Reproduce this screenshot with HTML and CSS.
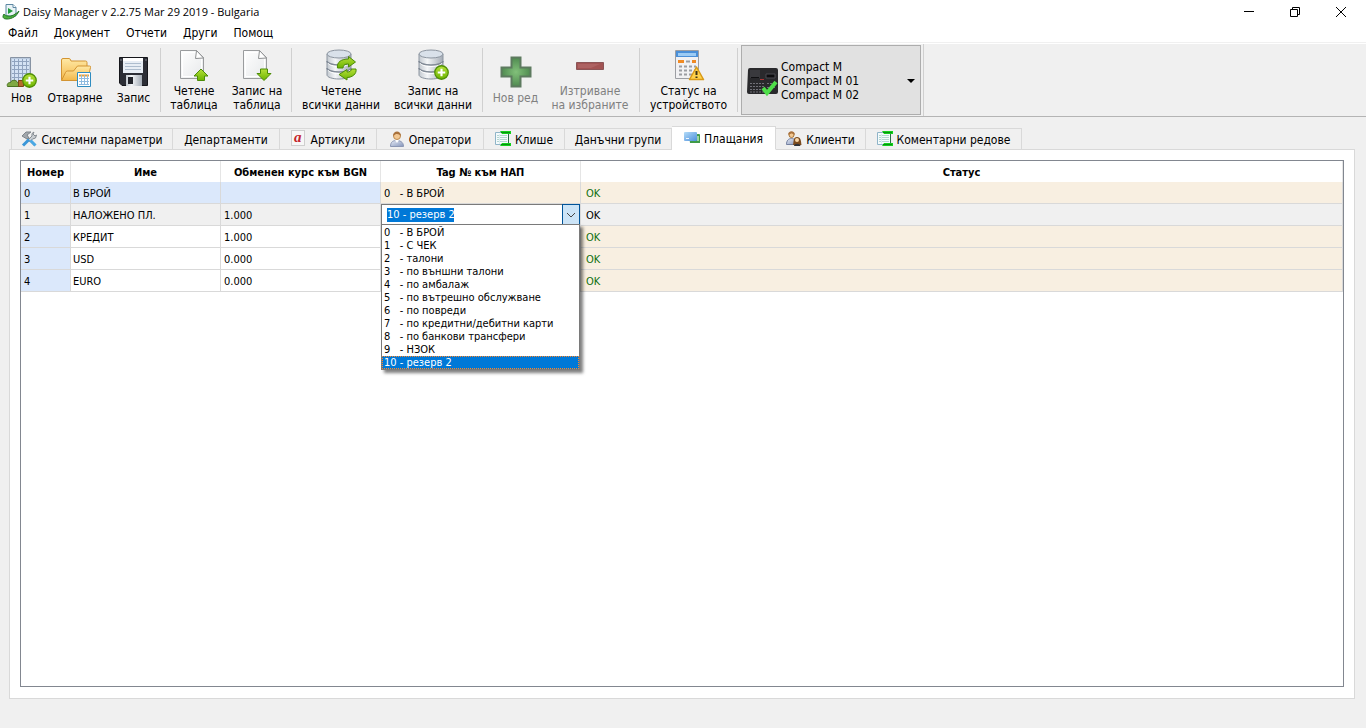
FILE: index.html
```html
<!DOCTYPE html>
<html lang="bg">
    <head>
        <meta charset="UTF-8">
        <title>Daisy Manager v 2.2.75 Mar 29 2019 - Bulgaria</title>
        <link rel="stylesheet" href="styles.css">
    </head>
    <body>
        <svg class="defs" width="0" height="0">
            <defs>
                <linearGradient id="paper" x1="0" y1="0" x2="1" y2="1">
                    <stop offset="0" stop-color="#fff"/><stop offset="1" stop-color="#e6e8ea"/>
                </linearGradient>
                <linearGradient id="green" x1="0" y1="0" x2="0" y2="1">
                    <stop offset="0" stop-color="#b6e03a"/><stop offset="1" stop-color="#6cb400"/>
                </linearGradient>
                <linearGradient id="metal" x1="0" y1="0" x2="1" y2="0">
                    <stop offset="0" stop-color="#c3c9d0"/><stop offset=".35" stop-color="#f4f6f8"/><stop offset="1" stop-color="#a3abb5"/>
                </linearGradient>
                <linearGradient id="folder" x1="0" y1="0" x2="0" y2="1">
                    <stop offset="0" stop-color="#ffe9a6"/><stop offset="1" stop-color="#f3b748"/>
                </linearGradient>
                <linearGradient id="shirt" x1="0" y1="0" x2="1" y2="1">
                    <stop offset="0" stop-color="#e6ebf5"/><stop offset="1" stop-color="#8595bb"/>
                </linearGradient>
                <linearGradient id="card" x1="0" y1="0" x2="1" y2="1">
                    <stop offset="0" stop-color="#b4dcf8"/><stop offset="1" stop-color="#4d8fdc"/>
                </linearGradient>
                <radialGradient id="cross">
                    <stop offset="0" stop-color="#82c07a"/><stop offset="1" stop-color="#4f8a50"/>
                </radialGradient>
                <symbol id="page" viewBox="0 0 32 32">
                    <path d="M2.500 1.500h16l7 7v21h-23z" fill="url(#paper)" stroke="#9a9c9e"/>
                    <path d="M4.500 3.500h13v6h6v18h-19z" fill="none" stroke="#fff"/>
                    <path d="M18.500 1.500l-1 8 8-.5z" fill="#fff" stroke="#8d8f91" stroke-linejoin="round"/>
                </symbol>
                <symbol id="base" viewBox="0 0 32 32">
                    <path d="M2 5v21c0 2 5 4 12 4s12-2 12-4V5z" fill="url(#metal)" stroke="#8c95a0"/>
                    <path d="M2 12c0 2 5 4 12 4s12-2 12-4M2 19c0 2 5 4 12 4s12-2 12-4" fill="none" stroke="#818a96" stroke-width="1.500"/>
                    <path d="M3 14c1 2 5 3.500 11 3.500s10-1.500 11-3.500M3 21c1 2 5 3.500 11 3.500s10-1.500 11-3.500" fill="none" stroke="#fff"/>
                    <ellipse cx="14" cy="5" rx="12" ry="4" fill="#d9e1ea" stroke="#8c95a0"/>
                </symbol>
                <symbol id="add" viewBox="0 0 14 14">
                    <circle cx="7" cy="7" r="6.300" fill="url(#green)" stroke="#4f8f05" stroke-width="1.200"/>
                    <path d="M7 3.500v7M3.500 7h7" stroke="#fff" stroke-width="2"/>
                </symbol>
                <symbol id="sheet" viewBox="0 0 16 16">
                    <path d="M.5 1.500h13v12H.5z" fill="#f4fafc" stroke="#8fb4c8"/>
                    <path d="M2 4.500h10M2 6.500h10M2 8.500h10M2 10.500h10" stroke="#b3d6d0"/>
                    <path d="M4.500 3v10" stroke="#dcecf0"/>
                    <path d="M13.500 3v10" stroke="#2d6b4a"/>
                    <path d="M5 0h11v3H7zM7 12h9v3H5z" fill="#12d01c"/>
                    <path d="M6 1.500h9M6 13.500h9" stroke="#079310"/>
                </symbol>
            </defs>
        </svg>

        <header class="titlebar">
            <svg class="app-icon" width="18" height="18" viewBox="0 0 18 18">
                <path d="M4 1.500h7l3 3V13H4z" fill="#e9f3f6" stroke="#5d87a3"/>
                <path d="M11 1.500v3h3" fill="#fff" stroke="#5d87a3"/>
                <path d="M6 5l5 3-5 3z" fill="#1f9a3a"/>
                <path d="M2 11c-2 3-1 5 3 5 5 0 10-3 12-8-3 3-8 6-11 5-2 0-3-1-4-2z" fill="#4caf3c" stroke="#23762a"/>
            </svg>
            <span class="title">Daisy Manager v 2.2.75 Mar 29 2019 - Bulgaria</span>
            <div class="window-buttons">
                <button aria-label="Minimize"><svg width="12" height="12"><path d="M1 5.500h10" stroke="#000"/></svg></button>
                <button aria-label="Restore"><svg width="12" height="12"><path d="M1.500 3.500h7v7h-7zM3.500 3V1.500h7v7H9" fill="none" stroke="#000"/></svg></button>
                <button aria-label="Close"><svg width="12" height="12"><path d="M1 1l10 10M11 1L1 11" stroke="#000"/></svg></button>
            </div>
        </header>

        <nav class="menu">
            <a href="#">Файл</a>
            <a href="#">Документ</a>
            <a href="#">Отчети</a>
            <a href="#">Други</a>
            <a href="#">Помощ</a>
        </nav>

        <div class="toolbar">
            <div class="group files">
                <button>
                    <svg width="32" height="32" viewBox="0 0 32 32">
                        <path d="M4.500 1.500h20v26h-20z" fill="#b9c9dd" stroke="#8793a3"/>
                        <path d="M6 3h17v23H6z" fill="#d3e2f4"/>
                        <path d="M8.500 3v23M12.500 3v23M16.500 3v23M20.500 3v23M6 5.500h17M6 9.500h17M6 13.500h17M6 17.500h17M6 21.500h17" stroke="#8fa3bf"/>
                        <path d="M1.500 30.500c-1-3 1-4 3-4 1-3 6-3 7 0 2 0 3 2 2 4z" fill="#7fa843" stroke="#4b7322"/>
                        <path d="M12.500 24.500h5v6h-5z" fill="#b56b2c" stroke="#7c4516"/>
                        <use href="#add" x="16" y="17" width="15" height="15"/>
                    </svg>
                    Нов
                </button>
                <button>
                    <svg width="32" height="32" viewBox="0 0 32 32">
                        <path d="M2.500 24V4q0-1.500 1.500-1.500h6q1.500 0 2 2.500h14.500q1.500 0 1.500 1.500V24z" fill="url(#folder)" stroke="#d39432"/>
                        <path d="M2.500 24.500l4-8q.5-1.500 2-1.500h6l4-5h12q1.500 0 1 1.500l-3 13z" fill="url(#folder)" stroke="#d39432"/>
                        <path d="M18.500 16.500h13v14h-13z" fill="#fff" stroke="#2f8cc0"/>
                        <path d="M20 19.500h10" stroke="#e8a13a" stroke-width="2"/>
                        <path d="M20 22.500h10M20 25.500h10M20 28.500h10M22.500 19v10M25.500 19v10M28.500 19v10" stroke="#8fbbe0"/>
                    </svg>
                    Отваряне
                </button>
                <button>
                    <svg width="32" height="32" viewBox="0 0 32 32">
                        <path d="M1.500 1.500h28v28H4l-2.500-2.500z" fill="#2c2e36" stroke="#15161b"/>
                        <path d="M5 2h20v15H5z" fill="#e8eef5"/>
                        <path d="M5 2h20v3H5z" fill="#fff"/>
                        <path d="M7 7.500h16M7 10.500h16M7 13.500h16" stroke="#aebdce"/>
                        <path d="M8 19h16v11H8z" fill="url(#metal)"/>
                        <path d="M10 21h5v7h-5z" fill="#22242b"/>
                        <path d="M28 3v2M3 3v2" stroke="#7b7e88"/>
                    </svg>
                    Запис
                </button>
            </div>
            <div class="group tables">
                <button>
                    <svg width="32" height="32" viewBox="0 0 32 32">
                        <use href="#page" width="32" height="32"/>
                        <path d="M23 20l7 7h-3.500v4.500h-7V27H16z" fill="url(#green)" stroke="#4c8c08" stroke-linejoin="round"/>
                    </svg>
                    Четене<br>таблица
                </button>
                <button>
                    <svg width="32" height="32" viewBox="0 0 32 32">
                        <use href="#page" width="32" height="32"/>
                        <path d="M23 31.500l7-7h-3.500V20h-7v4.500H16z" fill="url(#green)" stroke="#4c8c08" stroke-linejoin="round"/>
                    </svg>
                    Запис на<br>таблица
                </button>
            </div>
            <div class="group data">
                <button>
                    <svg width="32" height="32" viewBox="0 0 32 32">
                        <use href="#base" width="32" height="32"/>
                        <path d="M12.500 19c-1-6 4-9 11-9V7.500l7 5.500-7 5V15c-4 0-5 1-5.500 4z" fill="url(#green)" stroke="#4c8c08" stroke-linejoin="round"/>
                        <path d="M31 20c1 5-4 8.500-9 8.500V31l-8-5.500 8-5V23c3 0 4-1 4.500-3z" fill="url(#green)" stroke="#4c8c08" stroke-linejoin="round"/>
                    </svg>
                    Четене<br>всички данни
                </button>
                <button>
                    <svg width="32" height="32" viewBox="0 0 32 32">
                        <use href="#base" width="32" height="32"/>
                        <use href="#add" x="17" y="16" width="15" height="15"/>
                    </svg>
                    Запис на<br>всички данни
                </button>
            </div>
            <div class="group rows">
                <button disabled>
                    <svg width="32" height="32" viewBox="0 0 32 32">
                        <path d="M11.500 1.500h9v10h10v9h-10v10h-9v-10h-10v-9h10z" fill="url(#cross)" stroke="#5d7a5f" stroke-width="2"/>
                    </svg>
                    Нов ред
                </button>
                <button disabled>
                    <svg width="32" height="32" viewBox="0 0 32 32">
                        <path d="M2.500 13.500h27v7h-27z" fill="#a25353" stroke="#8b5557"/>
                        <path d="M4 15h22l-9 4H4z" fill="#ad6262"/>
                    </svg>
                    Изтриване<br>на избраните
                </button>
            </div>
            <div class="group status">
                <button>
                    <svg width="32" height="32" viewBox="0 0 32 32">
                        <path d="M2.500 1.500h23v28h-23z" fill="#f1f1f3" stroke="#9c9ea3"/>
                        <path d="M3 2h22v6H3z" fill="#4a8fd8"/>
                        <path d="M5 4h18v3H5z" fill="#9ccbf4"/>
                        <path d="M5 11h6v3H5zM19 11h4v3h-4z" fill="#f08a24"/>
                        <path d="M13 12.500h4M6 17.500h3m2 0h3m2 0h3m2 0h2M6 21.500h3m2 0h3m2 0h3m2 0h2M6 25.500h3m2 0h3m2 0h3" stroke="#9b9da2" stroke-width="2"/>
                        <path d="M23.500 18l7 12.500h-14z" fill="#ffd24b" stroke="#d99a17" stroke-width="1.500" stroke-linejoin="round"/>
                        <path d="M23.500 22v4M23.500 27.500v1.500" stroke="#3d3215" stroke-width="2"/>
                    </svg>
                    Статус на<br>устройството
                </button>
            </div>
            <div class="group devices">
                <button class="device">
                    <svg width="32" height="32" viewBox="0 0 32 32">
                        <path d="M1 5q0-2 2-2h26q2 0 2 2v22q0 2-2 2H2q-2 0-2-2z" fill="#29292c"/>
                        <path d="M3 5h10v8H3z" fill="#39393d"/>
                        <path d="M19 9h9v4h-9z" fill="#0c0c0e" stroke="#4a4a50"/>
                        <path d="M4 12.500h8" stroke="#101012"/>
                        <path d="M13 14.500h4" stroke="#a33"/>
                        <path d="M3 18.500h14M3 21.500h14M3 24.500h14M3 27h14M20 18.500h9M20 22.500h9" stroke="#707077" stroke-dasharray="2 1"/>
                        <path d="M16 23l4 5 9-11" fill="none" stroke="#4fdf4a" stroke-width="4"/>
                    </svg>
                    <span>Compact M<br>Compact M 01<br>Compact M 02</span>
                    <svg class="arrow" width="8" height="4"><path d="M0 0h8L4 4z"/></svg>
                </button>
            </div>
        </div>

        <main>
            <div class="tabs" role="tablist">
                <button role="tab" class="tab-system">
                    <svg width="16" height="16" viewBox="0 0 16 16">
                        <path d="M5 5l9 9.500" stroke="#9aa0a6" stroke-width="2"/>
                        <path d="M1 5l4-4h5L6 4l2 3-2 1z" fill="#a2a7ac" stroke="#7f858b"/>
                        <path d="M7 9l4-4q-1-3 2-4l-1 2 2 2 1.500-1q0 4-4 4l-3 3z" fill="#c9cdd1" stroke="#858b91"/>
                        <path d="M2 14.500l6-6" stroke="#3b97d8" stroke-width="3"/>
                        <path d="M9.500 9.500l5 5" stroke="#4aa8e4" stroke-width="3"/>
                    </svg>
                    Системни параметри
                </button>
                <button role="tab" class="tab-departments">Департаменти</button>
                <button role="tab" class="tab-articles">
                    <span class="letter">a</span>
                    Артикули
                </button>
                <button role="tab" class="tab-operators">
                    <svg width="16" height="16" viewBox="0 0 16 16">
                        <path d="M1.500 15.500c0-5 3-6 6-6s7 1 7 6z" fill="url(#shirt)" stroke="#8c97b4"/>
                        <path d="M6 9l2 3 2-3z" fill="#fff"/>
                        <circle cx="8" cy="5" r="3.500" fill="#f2c893" stroke="#bd8b50"/>
                        <path d="M4 5c0-6 8-6 8 0-2-2-4-2-5-2z" fill="#a9713c"/>
                    </svg>
                    Оператори
                </button>
                <button role="tab" class="tab-header">
                    <svg width="16" height="16"><use href="#sheet"/></svg>
                    Клише
                </button>
                <button role="tab" class="tab-taxes">Данъчни групи</button>
                <button role="tab" class="tab-payments active" aria-selected="true">
                    <svg width="16" height="16" viewBox="0 0 16 16">
                        <path d="M5 4.500l10-.5q1 0 1 1v8H6z" fill="#3f9a48"/>
                        <path d="M13 6h2v5h-2z" fill="#9fd6a0"/>
                        <path d="M0 3q0-1 1-1h11q1 0 1 1v7q0 1-1 1H1q-1 0-1-1z" fill="url(#card)"/>
                        <path d="M2 8.500h3" stroke="#eef7ff"/>
                    </svg>
                    Плащания
                </button>
                <button role="tab" class="tab-clients">
                    <svg width="16" height="16" viewBox="0 0 16 16">
                        <path d="M.5 13.500c0-4 2-6 5-6s5 2 5 6z" fill="url(#shirt)" stroke="#7380a0"/>
                        <circle cx="5.500" cy="4" r="2.500" fill="#f2c893" stroke="#a87538"/>
                        <path d="M2 4c0-5 7-5 7 0-2-2-4-2-7 0z" fill="#a9713c"/>
                        <path d="M7 14c1-4 0-8 4-8s4 4 4.500 8z" fill="#7b4b1e"/>
                        <circle cx="11" cy="9" r="2" fill="#f7d6a8"/>
                        <path d="M8 15c0-3 6-3 6.500 0z" fill="#2e3138"/>
                    </svg>
                    Клиенти
                </button>
                <button role="tab" class="tab-comments">
                    <svg width="16" height="16"><use href="#sheet"/></svg>
                    Коментарни редове
                </button>
            </div>

            <section class="pane">
                <div class="grid">
                    <table>
                        <colgroup>
                            <col class="col-number">
                            <col class="col-name">
                            <col class="col-rate">
                            <col class="col-tag">
                            <col>
                        </colgroup>
                        <thead>
                            <tr><th>Номер</th><th>Име</th><th>Обменен курс към BGN</th><th>Tag № към НАП</th><th>Статус</th></tr>
                        </thead>
                        <tbody>
                            <tr class="locked"><td>0</td><td>В БРОЙ</td><td></td><td>0&nbsp;&nbsp; - В БРОЙ</td><td>OK</td></tr>
                            <tr class="current">
                                <td>1</td><td>НАЛОЖЕНО ПЛ.</td><td>1.000</td>
                                <td class="editor">
                                    <div class="combo">
                                        <input type="text" value="10 - резерв 2" aria-label="Tag № към НАП">
                                        <button aria-label="Избор"><svg width="10" height="6"><path d="M1 1l4 4 4-4" fill="none" stroke="#444"/></svg></button>
                                        <select size="11" aria-label="Tag № към НАП">
                                            <option>0&nbsp;&nbsp; - В БРОЙ</option>
                                            <option>1&nbsp;&nbsp; - С ЧЕК</option>
                                            <option>2&nbsp;&nbsp; - талони</option>
                                            <option>3&nbsp;&nbsp; - по външни талони</option>
                                            <option>4&nbsp;&nbsp; - по амбалаж</option>
                                            <option>5&nbsp;&nbsp; - по вътрешно обслужване</option>
                                            <option>6&nbsp;&nbsp; - по повреди</option>
                                            <option>7&nbsp;&nbsp; - по кредитни/дебитни карти</option>
                                            <option>8&nbsp;&nbsp; - по банкови трансфери</option>
                                            <option>9&nbsp;&nbsp; - НЗОК</option>
                                            <option selected>10 - резерв 2</option>
                                        </select>
                                    </div>
                                </td>
                                <td>OK</td>
                            </tr>
                            <tr><td>2</td><td>КРЕДИТ</td><td>1.000</td><td></td><td>OK</td></tr>
                            <tr><td>3</td><td>USD</td><td>0.000</td><td></td><td>OK</td></tr>
                            <tr><td>4</td><td>EURO</td><td>0.000</td><td></td><td>OK</td></tr>
                        </tbody>
                    </table>
                </div>
            </section>
        </main>
    </body>
</html>
```
FILE: styles.css
```css
*{
    box-sizing:border-box;
}
body{
    display:flex;
    flex-direction:column;
    height:100vh;
    margin:0;
    background:#f0f0f0;
    color:#000;
    font:12px/14px Tahoma, "DejaVu Sans Condensed", "DejaVu Sans", sans-serif;
}
button{
    margin:0;
    padding:0;
    border:0;
    background:none;
    color:inherit;
    font:inherit;
}
svg{
    flex:none;
}
.defs{
    position:absolute;
}

/* title and menu */
.titlebar{
    display:flex;
    align-items:center;
    height:23px;
    padding:0 2px;
    background:#fff;
}
.title{
    margin-left:3px;
    font-family:"Segoe UI", "Open Sans", sans-serif;
    font-size:11px;
}
.window-buttons{
    display:flex;
    margin-left:auto;
}
.window-buttons button{
    display:flex;
    align-items:center;
    justify-content:center;
    width:46px;
    height:20px;
}
.menu{
    display:flex;
    gap:16px;
    height:20px;
    padding:3px 8px;
    background:#fff;
    border-bottom:1px solid #f0f0f0;
}
.menu a{
    color:#000;
    text-decoration:none;
}

/* toolbar */
.toolbar{
    display:flex;
    height:74px;
    border-top:1px solid #fff;
    border-bottom:1px solid #b4b4b4;
}
.group{
    display:flex;
    margin:4px 0;
    border-right:1px solid #d0d0d0;
}
.group button{
    display:flex;
    flex-direction:column;
    align-items:center;
    justify-content:center;
    width:64px;
    text-align:center;
    white-space:nowrap;
}
.group svg{
    margin-bottom:3px;
}
.files button{
    width:53px;
}
.files button:first-child{
    width:43px;
}
.files button:nth-child(2){
    width:64px;
}
.tables{
    padding:0 3px 0 1px;
}
.tables button:last-child{
    width:62px;
}
.data button{
    width:92px;
}
.data{
    padding:0 3px;
}
.rows{
    padding-right:7px;
}
.rows button{
    width:84px;
}
.rows button:first-child{
    width:65px;
}
.status button{
    width:97px;
}
.group button:disabled{
    color:#808080;
}
.devices{
    margin:0;
    padding:1px 2px 1px 3px;
}
.group .device{
    flex-direction:row;
    justify-content:flex-start;
    width:180px;
    padding:1px 5px 0;
    border:1px solid #adadad;
    background:#e1e1e1;
    text-align:left;
}
.device span{
    margin-left:2px;
}
.group .device svg{
    margin-bottom:0;
}
.device .arrow{
    margin-left:auto;
}

/* tabs */
main{
    display:flex;
    flex:1;
    flex-direction:column;
    padding:9px 11px 29px 9px;
}
.tabs{
    position:relative;
    z-index:1;
    display:flex;
    align-items:flex-end;
    margin-bottom:-1px;
    padding-left:2px;
}
.tabs button{
    display:flex;
    align-items:center;
    justify-content:center;
    gap:4px;
    height:22px;
    padding-top:2px;
    border:1px solid #d9d9d9;
    border-left:0;
    white-space:nowrap;
}
.tabs button:first-child{
    border-left:1px solid #d9d9d9;
}
.tabs svg{
    margin-bottom:3px;
}
.tabs .active{
    height:24px;
    border-bottom-color:#fff;
    background:#fff;
}
.tab-system{
    width:162px;
}
.tab-departments, .tab-operators, .tab-taxes{
    width:107px;
}
.tab-articles{
    width:97px;
}
.tab-header{
    width:81px;
}
.tab-payments{
    width:104px;
}
.tab-clients{
    width:90px;
}
.tab-comments{
    width:156px;
}
.letter{
    height:16px;
    margin:0 2px 4px 0;
    padding:0 2px;
    border:1px solid #cfcfcf;
    background:#f7f7f7;
    color:#c4232b;
    font:italic bold 15px/12px "Liberation Serif", serif;
}

/* payments table */
.pane{
    display:flex;
    flex:1;
    padding:10px 10px 11px;
    border:1px solid #d9d9d9;
    background:#fff;
}
.grid{
    flex:1;
    border:1px solid #828790;
}
table{
    width:100%;
    border-collapse:separate;
    border-spacing:0;
    table-layout:fixed;
    font-size:11px;
}
.col-number{
    width:50px;
}
.col-name{
    width:150px;
}
.col-rate{
    width:160px;
}
.col-tag{
    width:200px;
}
th{
    height:21px;
    padding:2px 0 0;
    border-right:1px solid #e5e5e5;
    white-space:nowrap;
}
td{
    height:22px;
    padding:2px 3px 0;
    border-right:1px solid #d9d9d9;
    border-bottom:1px solid #d9d9d9;
}
td:first-child, .locked td{
    background:#dbe8fb;
}
td:nth-child(2){
    padding-left:2px;
}
td:nth-child(4), .locked td:nth-child(4), td:last-child, .locked td:last-child{
    background:#f8efe1;
}
td:last-child{
    padding-left:5px;
    color:#107010;
}
.current td, .current td:last-child{
    background:#f0f0f0;
    color:#000;
}
.current .editor{
    padding:0;
}

/* open drop-down of the edited cell */
.combo{
    position:relative;
    display:flex;
    align-items:center;
    height:21px;
    padding-left:5px;
    border:1px solid #7a7a7a;
    background:#fff;
}
.combo input{
    width:67px;
    height:14px;
    padding:1px 0 0;
    border:0;
    background:#0078d7;
    color:#fff;
    font:inherit;
}
.combo button{
    display:flex;
    align-items:center;
    justify-content:center;
    width:18px;
    height:21px;
    margin:-1px -1px -1px auto;
    border:1px solid #005499;
    background:#cce4f7;
}
.combo select{
    position:absolute;
    top:19px;
    left:-1px;
    z-index:2;
    width:199px;
    height:146px;
    padding:1px 0 0;
    overflow:hidden;
    border:1px solid #7a7a7a;
    border-radius:0;
    outline:0;
    background:#fff;
    box-shadow:3px 3px 3px rgba(0, 0, 0, .5);
    color:#000;
    font:inherit;
}
.combo option{
    height:13px;
    min-height:13px;
    padding:0 2px;
    line-height:13px;
}
.combo option:checked{
    outline:1px dotted #ff8728;
    outline-offset:-1px;
    background:linear-gradient(#0078d7, #0078d7);
    color:#fff;
}
```
